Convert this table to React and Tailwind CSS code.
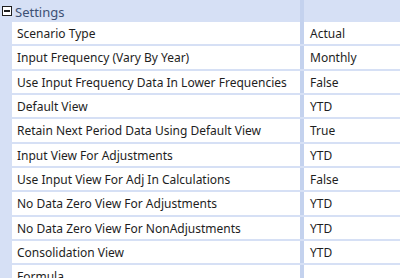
const rows = [
  ['Scenario Type', 'Actual'],
  ['Input Frequency (Vary By Year)', 'Monthly'],
  ['Use Input Frequency Data In Lower Frequencies', 'False'],
  ['Default View', 'YTD'],
  ['Retain Next Period Data Using Default View', 'True'],
  ['Input View For Adjustments', 'YTD'],
  ['Use Input View For Adj In Calculations', 'False'],
  ['No Data Zero View For Adjustments', 'YTD'],
  ['No Data Zero View For NonAdjustments', 'YTD'],
  ['Consolidation View', 'YTD'],
  ['Formula', ''],
];

export default function App() {
  return (
    <div
      className="w-[400px] h-[278px] overflow-hidden bg-[#d6e0f5] text-[12px] text-[#1e1e1e]"
      style={{ fontFamily: '"Noto Sans", "Open Sans", sans-serif' }}
    >
      <div className="h-[22px] flex items-center">
        <div className="w-[12px] flex justify-center">
          <div className="w-[10px] h-[10px] border border-[#1e1e1e] bg-white flex items-center justify-center ml-[1px]">
            <div className="w-[6px] h-[2px] bg-[#1e1e1e]" />
          </div>
        </div>
        <span className="ml-[3px] pt-[2px] text-[13px] text-[#3d5074] leading-none">Settings</span>
        <div className="flex-1" />
        <div className="w-[4px] h-full bg-[#c4d2ee] mr-[96px]" />
      </div>
      <div className="ml-[12px]">
        {rows.map(([name, value]) => (
          <div key={name} className="h-[24.33px] flex border-b-2 border-[#d6e0f5] bg-white">
            <div className="w-[288px] pl-[5px] pt-[2px] flex items-center whitespace-nowrap overflow-hidden">{name}</div>
            <div className="w-[4px] bg-[#c4d2ee]" />
            <div className="flex-1 pl-[6px] pt-[2px] flex items-center">{value}</div>
          </div>
        ))}
      </div>
    </div>
  );
}
